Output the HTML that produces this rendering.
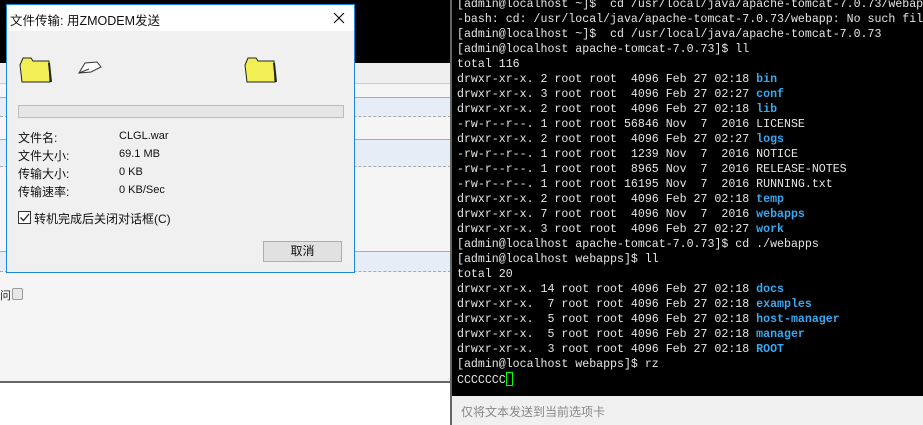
<!DOCTYPE html>
<html><head><meta charset="utf-8"><style>
*{margin:0;padding:0;box-sizing:border-box}
body{width:923px;height:425px;position:relative;overflow:hidden;background:#f5f5f5;font-family:"Liberation Sans","Noto Sans CJK SC",sans-serif}
.abs{position:absolute}
#term{left:452px;top:0;width:471px;height:396px;background:#000;overflow:hidden}
#tl{position:absolute;left:5px;top:-3px;font-family:"Liberation Mono","DejaVu Sans Mono",monospace;font-size:11.6px;line-height:15px;color:#e6e6e6;white-space:pre}
.d{color:#3aa8f0;font-weight:bold}
.cur{display:inline-block;width:7px;height:14px;border:1px solid #0f0;vertical-align:-3px}
.lbl{position:absolute;font-size:12px;color:#111}
</style></head><body>
<div class="abs" style="left:0;top:0;width:451px;height:63px;background:#000"></div>
<div class="abs" style="left:0;top:63px;width:451px;height:21px;background:#efefef;border-bottom:1px solid #ccc"></div>
<div class="abs" style="left:0;top:97px;width:451px;height:20px;background:#e6edf7;border-top:1px solid #aaa;border-bottom:1px dashed #aaa"></div>
<div class="abs" style="left:0;top:139px;width:451px;height:28px;background:#e6edf7;border-top:1px solid #aaa;border-bottom:1px dashed #aaa"></div>
<div class="abs" style="left:0;top:251px;width:451px;height:21px;background:#e6edf7;border-top:1px solid #aaa;border-bottom:1px dashed #aaa"></div>
<div class="abs" style="left:0;top:287px;font-size:11px;color:#222">问</div>
<div class="abs" style="left:12px;top:288px;width:11px;height:12px;border:1px solid #999;border-radius:2px;background:#e8e8e8"></div>
<div class="abs" style="left:0;top:381px;width:451px;height:44px;background:#fff;border-top:2px solid #666"></div>
<div class="abs" style="left:450px;top:0;width:2px;height:425px;background:#666"></div>
<div class="abs" style="left:452px;top:396px;width:471px;height:29px;background:#f0f0f0"></div>
<div class="abs" style="left:461px;top:403px;font-size:12px;color:#888">仅将文本发送到当前选项卡</div>
<div id="term" class="abs"><div id="tl">[admin@localhost ~]$  cd /usr/local/java/apache-tomcat-7.0.73/webapp
-bash: cd: /usr/local/java/apache-tomcat-7.0.73/webapp: No such file or directory
[admin@localhost ~]$  cd /usr/local/java/apache-tomcat-7.0.73
[admin@localhost apache-tomcat-7.0.73]$ ll
total 116
drwxr-xr-x. 2 root root  4096 Feb 27 02:18 <span class="d">bin</span>
drwxr-xr-x. 3 root root  4096 Feb 27 02:27 <span class="d">conf</span>
drwxr-xr-x. 2 root root  4096 Feb 27 02:18 <span class="d">lib</span>
-rw-r--r--. 1 root root 56846 Nov  7  2016 LICENSE
drwxr-xr-x. 2 root root  4096 Feb 27 02:27 <span class="d">logs</span>
-rw-r--r--. 1 root root  1239 Nov  7  2016 NOTICE
-rw-r--r--. 1 root root  8965 Nov  7  2016 RELEASE-NOTES
-rw-r--r--. 1 root root 16195 Nov  7  2016 RUNNING.txt
drwxr-xr-x. 2 root root  4096 Feb 27 02:18 <span class="d">temp</span>
drwxr-xr-x. 7 root root  4096 Nov  7  2016 <span class="d">webapps</span>
drwxr-xr-x. 3 root root  4096 Feb 27 02:27 <span class="d">work</span>
[admin@localhost apache-tomcat-7.0.73]$ cd ./webapps
[admin@localhost webapps]$ ll
total 20
drwxr-xr-x. 14 root root 4096 Feb 27 02:18 <span class="d">docs</span>
drwxr-xr-x.  7 root root 4096 Feb 27 02:18 <span class="d">examples</span>
drwxr-xr-x.  5 root root 4096 Feb 27 02:18 <span class="d">host-manager</span>
drwxr-xr-x.  5 root root 4096 Feb 27 02:18 <span class="d">manager</span>
drwxr-xr-x.  3 root root 4096 Feb 27 02:18 <span class="d">ROOT</span>
[admin@localhost webapps]$ rz
CCCCCCC<span class="cur"></span></div></div>

<div class="abs" style="left:6px;top:4px;width:349px;height:269px;border:1px solid #1a86e0;background:#f0f0f0">
 <div class="abs" style="left:0;top:0;width:347px;height:26px;background:#fff"></div>
 <div class="lbl" style="left:3px;top:5px;font-size:12.5px">文件传输: 用ZMODEM发送</div>
 <svg class="abs" style="left:326px;top:7px" width="12" height="12"><path d="M1 1L11 11M11 1L1 11" stroke="#111" stroke-width="1.2"/></svg>
 <svg class="abs" style="left:12px;top:48px" width="34" height="32"><path d="M1 12L4 5H12L14 8H30L31 29H3Z" fill="#f2ef55" stroke="#222"/><path d="M30 10L32 29" stroke="#222" stroke-width="2"/></svg>
 <svg class="abs" style="left:70px;top:50px" width="26" height="22"><path d="M2 18L8 8L20 7L24 12L14 17Z" fill="#fff" stroke="#333"/><path d="M2 18L12 14" stroke="#333"/></svg>
 <svg class="abs" style="left:237px;top:48px" width="34" height="32"><path d="M1 12L4 5H12L14 8H30L31 29H3Z" fill="#f2ef55" stroke="#222"/><path d="M30 10L32 29" stroke="#222" stroke-width="2"/></svg>
 <div class="abs" style="left:11px;top:100px;width:326px;height:13px;border:1px solid #bcbcbc;background:#e6e6e6"></div>
 <div class="lbl" style="left:11px;top:124px">文件名:</div>
 <div class="lbl" style="left:112px;top:125px;font-size:11px">CLGL.war</div>
 <div class="lbl" style="left:11px;top:142px">文件大小:</div>
 <div class="lbl" style="left:112px;top:143px;font-size:11px">69.1 MB</div>
 <div class="lbl" style="left:11px;top:160px">传输大小:</div>
 <div class="lbl" style="left:112px;top:161px;font-size:11px">0 KB</div>
 <div class="lbl" style="left:11px;top:178px">传输速率:</div>
 <div class="lbl" style="left:112px;top:179px;font-size:11px">0 KB/Sec</div>
 <div class="abs" style="left:11px;top:206px;width:13px;height:13px;border:1px solid #333;background:#fff"></div>
 <svg class="abs" style="left:12px;top:207px" width="11" height="11"><path d="M1.5 5.5L4.5 8.5L10 2" fill="none" stroke="#222" stroke-width="1.3"/></svg>
 <div class="lbl" style="left:27px;top:205px">转机完成后关闭对话框(C)</div>
 <div class="abs" style="left:256px;top:236px;width:79px;height:21px;border:1px solid #adadad;background:#e1e1e1;font-size:12px;text-align:center;line-height:19px;color:#111">取消</div>
</div>
</body></html>
